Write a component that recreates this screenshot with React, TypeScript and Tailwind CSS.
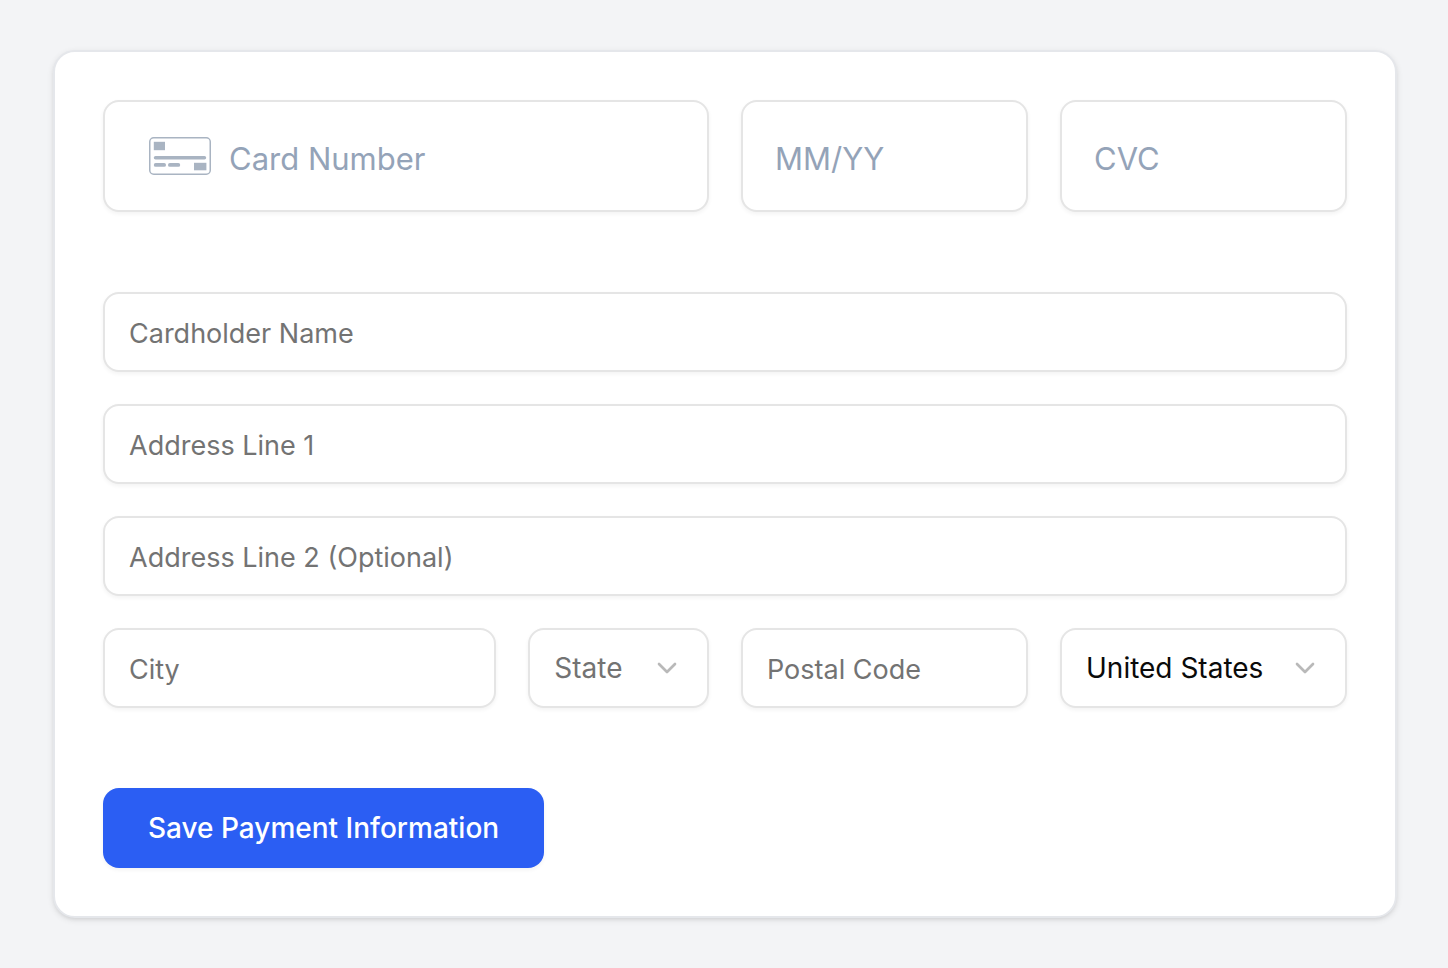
import type { ReactNode } from "react";
import { ChevronDown } from "lucide-react";

const cardField =
  "flex h-28 min-w-0 items-center rounded-2xl border-2 border-[#e5e5e5] bg-white shadow-[0_2px_4px_rgba(0,0,0,0.05)]";
const cardInput =
  "w-full min-w-0 bg-transparent pt-1.5 text-[31px] leading-10 text-slate-900 outline-none placeholder:text-[#94a3b8]";
const field =
  "h-20 w-full min-w-0 rounded-2xl border-2 border-[#e5e5e5] bg-white px-6 leading-10 outline-none shadow-[0_2px_4px_rgba(0,0,0,0.05)]";

function CardIcon() {
  return (
    <svg className="h-[38px] w-[62px] shrink-0" viewBox="0 0 62 38" fill="none" aria-hidden="true">
      <rect x="0.75" y="0.75" width="60.5" height="36.5" rx="4" stroke="#a9b4c2" strokeWidth="1.5" />
      <g fill="#a9b4c2">
        <rect x="4.8" y="4.8" width="11.2" height="8.4" />
        <rect x="4.8" y="19" width="52.4" height="3.4" rx="1.7" />
        <rect x="4.8" y="26" width="12.2" height="3.8" rx="1.9" />
        <rect x="19" y="26" width="12.2" height="3.8" rx="1.9" />
        <rect x="45" y="25.8" width="12.4" height="7.5" />
      </g>
    </svg>
  );
}

function TextField({ label, className }: { label: string; className: string }) {
  return (
    <div className={className}>
      <input
        type="text"
        aria-label={label}
        placeholder={label}
        className={`${field} pt-0.5 text-[27px] text-black placeholder:text-[#737373]`}
      />
    </div>
  );
}

function SelectField({
  label,
  className,
  tone,
  children,
}: {
  label: string;
  className: string;
  tone: string;
  children: ReactNode;
}) {
  return (
    <div className={`relative ${className}`}>
      <select aria-label={label} className={`${field} appearance-none text-[28px] ${tone}`}>
        {children}
      </select>
      <ChevronDown
        aria-hidden="true"
        className="pointer-events-none absolute inset-y-0 right-[26px] my-auto size-8 text-[#b9b9b9]"
      />
    </div>
  );
}

export default function App() {
  return (
    <main className="min-h-screen bg-[#f3f4f6] py-[50px] pr-[51px] pl-[53px] font-['Inter',sans-serif]">
      <form
        onSubmit={(e) => e.preventDefault()}
        className="flex flex-col items-start gap-20 rounded-[22px] border-2 border-[#e5e7eb] bg-white p-12 shadow-[0_2px_6px_rgba(0,0,0,0.1),0_2px_4px_-2px_rgba(0,0,0,0.1)]"
      >
        <div className="grid w-full grid-cols-12 gap-8">
          <div className={`${cardField} col-span-6 gap-[18px] pr-8 pl-11`}>
            <CardIcon />
            <input type="text" aria-label="Card Number" placeholder="Card Number" className={cardInput} />
          </div>
          <div className={`${cardField} col-span-3 px-8`}>
            <input type="text" aria-label="Expiry date" placeholder="MM/YY" className={cardInput} />
          </div>
          <div className={`${cardField} col-span-3 px-8`}>
            <input type="text" aria-label="Security code" placeholder="CVC" className={cardInput} />
          </div>
        </div>

        <div className="grid w-full grid-cols-12 gap-8">
          <TextField label="Cardholder Name" className="col-span-12" />
          <TextField label="Address Line 1" className="col-span-12" />
          <TextField label="Address Line 2 (Optional)" className="col-span-12" />
          <TextField label="City" className="col-span-4" />
          <SelectField label="State" className="col-span-2" tone="text-[#737373]">
            <option>State</option>
          </SelectField>
          <TextField label="Postal Code" className="col-span-3" />
          <SelectField label="Country" className="col-span-3" tone="text-[#0a0a0a]">
            <option>United States</option>
          </SelectField>
        </div>

        <button
          type="submit"
          className="h-20 rounded-2xl bg-[#2b5ef3] px-[45px] text-[28px] leading-10 font-medium text-white shadow-[0_2px_4px_rgba(0,0,0,0.05)]"
        >
          Save Payment Information
        </button>
      </form>
    </main>
  );
}
